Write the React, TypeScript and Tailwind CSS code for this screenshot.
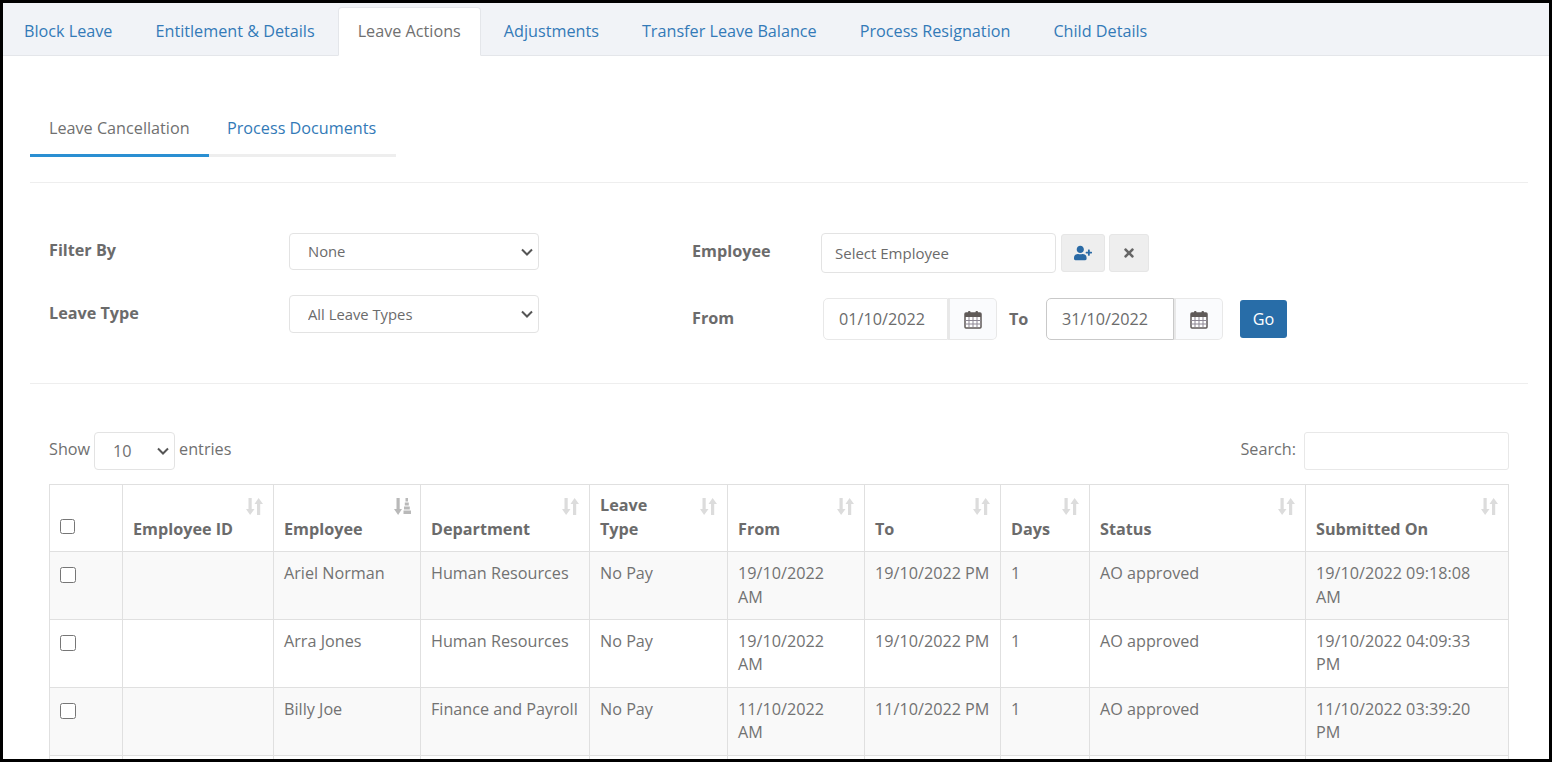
import { FaTimes, FaUserPlus } from "react-icons/fa";

const mainTabs = [
  "Block Leave",
  "Entitlement & Details",
  "Leave Actions",
  "Adjustments",
  "Transfer Leave Balance",
  "Process Resignation",
  "Child Details",
];

const columns = [
  { label: "", width: "w-[73px]" },
  { label: "Employee ID", width: "w-[151px]" },
  { label: "Employee", width: "w-[147px]", sorted: true },
  { label: "Department", width: "w-[169px]" },
  { label: "Leave\nType", width: "w-[138px]" },
  { label: "From", width: "w-[137px]" },
  { label: "To", width: "w-[136px]" },
  { label: "Days", width: "w-[89px]" },
  { label: "Status", width: "w-[216px]" },
  { label: "Submitted On", width: "w-[203px]" },
];

const rows = [
  ["Ariel Norman", "Human Resources", "No Pay", "19/10/2022\nAM", "19/10/2022 PM", "1", "AO approved", "19/10/2022 09:18:08\nAM"],
  ["Arra Jones", "Human Resources", "No Pay", "19/10/2022\nAM", "19/10/2022 PM", "1", "AO approved", "19/10/2022 04:09:33\nPM"],
  ["Billy Joe", "Finance and Payroll", "No Pay", "11/10/2022\nAM", "11/10/2022 PM", "1", "AO approved", "11/10/2022 03:39:20\nPM"],
  ["", "", "", "", "", "", "", ""],
];

function SortIcon({ sorted }: { sorted?: boolean }) {
  if (sorted) {
    return (
      <svg viewBox="0 0 17 17" className="absolute top-[13px] right-[9px] h-[17px] w-[17px] fill-[#b9b9b9]">
        <path d="M2.500 0h3.200v11H8l-3.900 6L0 11h2.500z" />
        <path d="M11.500 0h2.500v3.500h-2.500zM10.800 4.500h4v3h-4zM10 8.500h5.800v3H10zM9.500 12.500h7.500V16H9.500z" />
      </svg>
    );
  }
  return (
    <svg viewBox="0 0 17 17" className="absolute top-[13px] right-[10px] h-[17px] w-[17px] fill-[#dcdcdc]">
      <path d="M2.500 0h3.200v11H8.500l-4.400 6L0 11h2.500z" />
      <path d="M11 17h3.200V6H17l-4.400-6L8.500 6H11z" />
    </svg>
  );
}

function CalendarIcon() {
  return (
    <svg viewBox="0 0 18 19" className="h-[19px] w-[18px]">
      <rect x="1" y="3" width="16" height="15" rx="1" fill="#fff" stroke="#5f5a58" strokeWidth="1.500" />
      <rect x="1" y="3" width="16" height="4" fill="#5f5a58" />
      <rect x="4" y="1" width="2.500" height="4" rx="1" fill="#5f5a58" />
      <rect x="11.500" y="1" width="2.500" height="4" rx="1" fill="#5f5a58" />
      <path d="M5 7v10M9 7v10M13 7v10M1 10.500h16M1 14h16" stroke="#8d8794" strokeWidth="1" />
    </svg>
  );
}

function Select({ value, className }: { value: string; className: string }) {
  return (
    <div className={`relative ${className}`}>
      <select className="h-full w-full appearance-none rounded-[4px] border border-[#e3e3e3] bg-white pl-[18px]">
        <option>{value}</option>
      </select>
      <svg viewBox="0 0 12 8" className="pointer-events-none absolute top-1/2 right-[6px] h-[8px] w-[12px] -translate-y-1/2 fill-none stroke-[#555555] stroke-2">
        <path d="M1 1.500l5 5 5-5" />
      </svg>
    </div>
  );
}

function DateField({ value, inputWidth, focused }: { value: string; inputWidth: string; focused?: boolean }) {
  return (
    <div className="flex h-[42px]">
      <div
        className={`flex items-center rounded-l-[5px] border pl-[15px] ${inputWidth} ${
          focused ? "border-[#c9c9c9]" : "border-[#e8e8e8]"
        }`}
      >
        {value}
      </div>
      <div className="flex w-[49px] items-center justify-center rounded-r-[5px] border border-l-2 border-[#e8e8e8] bg-[#fafbfd]">
        <CalendarIcon />
      </div>
    </div>
  );
}

export default function App() {
  return (
    <div className="h-[762px] overflow-hidden border-[3px] border-black bg-white font-['Open_Sans',sans-serif] text-[16.2px] leading-[23.4px] text-[#6b6b6b]">
      {/* main tabs */}
      <div className="flex h-[53px] items-end border-b border-[#e4e6ea] bg-[#f1f3f7] pl-px">
        {mainTabs.map((tab) => (
          <div
            key={tab}
            className={`mr-[3px] -mb-px flex h-[49px] items-center rounded-t-[4px] border px-[19px] ${
              tab === "Leave Actions"
                ? "border-[#e4e6ea] border-b-white bg-white text-[#707070]"
                : "border-transparent text-[#337ab7]"
            }`}
          >
            {tab}
          </div>
        ))}
      </div>

      <div className="pr-[21px] pl-[27px]">
        {/* sub tabs */}
        <div className="mt-[59px] flex w-[366px] border-b-[3px] border-[#eeeeee]">
          <div className="-mb-[3px] w-[179px] border-b-[3px] border-[#2a8fd2] pt-[2px] pb-[14px] pl-[19px] text-[#707070]">Leave Cancellation</div>
          <div className="pt-[2px] pl-[18px] text-[#337ab7]">Process Documents</div>
        </div>
        <div className="mt-[25px] border-t border-[#eeeeee]" />

        {/* filters */}
        <div className="mt-[50px] flex pl-[19px]">
          <div className="flex w-[643px] flex-col gap-[25px]">
            <div className="flex h-[37px] items-start">
              <label className="w-[240px] pt-[6px] font-bold">Filter By</label>
              <Select value="None" className="h-[37px] w-[250px] text-[14.8px]" />
            </div>
            <div className="flex h-[38px] items-start">
              <label className="w-[240px] pt-[7px] font-bold">Leave Type</label>
              <Select value="All Leave Types" className="h-[38px] w-[250px] text-[14.8px]" />
            </div>
          </div>

          <div className="flex flex-col gap-[25px]">
            <div className="flex h-[40px] items-center">
              <label className="w-[129px] pb-[3px] font-bold">Employee</label>
              <div className="flex h-[40px] w-[235px] items-center rounded-[4px] border border-[#e3e3e3] pl-[13px] text-[15px]">
                Select Employee
              </div>
              <button className="ml-[5px] flex h-[38px] w-[44px] items-center justify-center rounded-[3px] border border-[#e6e6e6] bg-[#eeeeee] text-[#2a6aa5]">
                <FaUserPlus size={18} />
              </button>
              <button className="ml-[4px] flex h-[38px] w-[40px] items-center justify-center rounded-[3px] border border-[#e6e6e6] bg-[#eeeeee] text-[#666666]">
                <FaTimes size={14} />
              </button>
            </div>
            <div className="flex h-[42px] items-center">
              <label className="w-[131px] pb-[2px] font-bold">From</label>
              <DateField value="01/10/2022" inputWidth="w-[125px]" />
              <label className="w-[49px] pl-[12px] font-bold">To</label>
              <DateField value="31/10/2022" inputWidth="w-[128px]" focused />
              <button className="ml-[17px] h-[38px] w-[47px] rounded-[3px] bg-[#286da8] text-center text-white">Go</button>
            </div>
          </div>
        </div>
        <div className="mt-[43px] border-t border-[#eeeeee]" />

        {/* table controls */}
        <div className="mt-[48px] flex items-start justify-between pr-[19px] pl-[19px] text-[#707070]">
          <div className="flex items-center">
            <span className="pb-[3px]">Show</span>
            <Select value="10" className="mx-[4px] h-[38px] w-[81px]" />
            <span className="pb-[3px]">entries</span>
          </div>
          <div className="flex items-center">
            <span className="pb-[3px]">Search:</span>
            <input className="ml-[8px] h-[38px] w-[205px] rounded-[3px] border border-[#e8e8e8]" />
          </div>
        </div>

        {/* table */}
        <div className="mt-[14px] pl-[19px]">
          <table className="w-[1459px] table-fixed border-collapse">
            <thead>
              <tr>
                {columns.map((col, colIndex) => (
                  <th
                    key={colIndex}
                    className={`relative h-[66px] border border-[#e0e0e0] px-[10px] pt-[9px] pb-[10px] text-left align-bottom font-bold whitespace-pre-line ${col.width}`}
                  >
                    {colIndex === 0 ? (
                      <input type="checkbox" className="mb-[7px] block h-[15px] w-[15px]" />
                    ) : (
                      <>
                        {col.label}
                        <SortIcon sorted={col.sorted} />
                      </>
                    )}
                  </th>
                ))}
              </tr>
            </thead>
            <tbody>
              {rows.map((row, rowIndex) => (
                <tr key={rowIndex} className={rowIndex % 2 === 0 ? "bg-[#f9f9f9]" : "bg-white"}>
                  <td className="border border-[#e0e0e0] px-[10px] pt-[15px] pb-[10px] align-top">
                    <input type="checkbox" className="block h-[16px] w-[16px]" />
                  </td>
                  <td className="border border-[#e0e0e0]" />
                  {row.map((cell, cellIndex) => (
                    <td key={cellIndex} className="border border-[#e0e0e0] p-[10px] align-top whitespace-pre-line text-[#727272]">
                      {cell}
                    </td>
                  ))}
                </tr>
              ))}
            </tbody>
          </table>
        </div>
      </div>
    </div>
  );
}
